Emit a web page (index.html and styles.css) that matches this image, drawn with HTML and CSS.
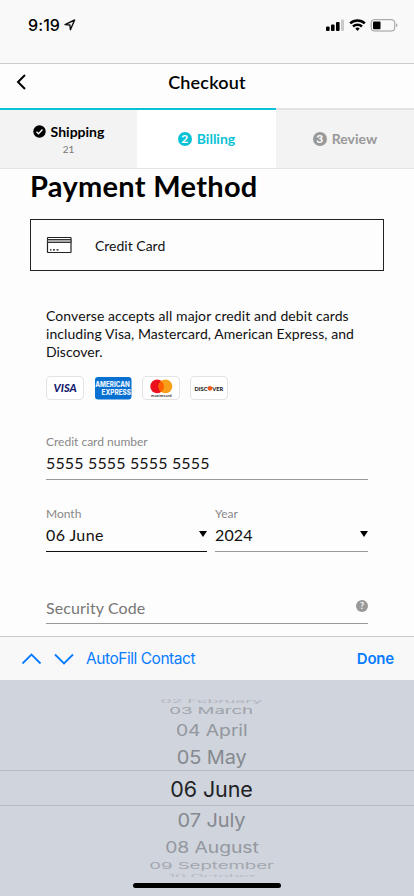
FILE: index.html
```html
<!DOCTYPE html>
<html lang="en">
<head>
<meta charset="utf-8">
<meta name="viewport" content="width=device-width, initial-scale=1">
<title>Checkout</title>
<link rel="stylesheet" href="styles.css">
</head>
<body>
<div class="phone">
  <header class="status">
    <span class="time">9:19</span>
    <svg class="location" width="12" height="12" viewBox="0 0 12 12"><path d="M1 5.6 10.6 1 6.4 10.8 5.9 6z" fill="none" stroke="#111" stroke-width="1.4" stroke-linejoin="round"/></svg>
    <svg class="indicators" width="74" height="16" viewBox="0 0 74 16">
      <rect x="1" y="9.500" width="3.600" height="4.500" rx="1"/><rect x="6" y="7.500" width="3.600" height="6.500" rx="1"/><rect x="11" y="5" width="3.600" height="9" rx="1"/><rect x="16" y="2.500" width="3" height="11.500" rx="1" fill="#c9c9c9"/>
      <path d="M25.200 6.400a10.500 10.500 0 0 1 14.600 0M28 9.500a6.600 6.600 0 0 1 9 0" fill="none" stroke="#000" stroke-width="2.500"/>
      <path d="M30.300 11.500a3.300 3.300 0 0 1 4.400 0L32.500 13.900z"/>
      <rect x="46.200" y="2.700" width="23.600" height="11.300" rx="3" fill="none" stroke="#999"/>
      <rect x="48" y="4.500" width="7.500" height="7.700" rx="1"/><path d="M71.300 6.200q2 2 0 4z" fill="#888"/>
    </svg>
  </header>
  <nav class="nav">
    <svg class="back" width="12" height="18" viewBox="0 0 12 18"><path d="M10 2 3 9l7 7" fill="none" stroke="#000" stroke-width="2"/></svg>
    <h1>Checkout</h1>
  </nav>
  <div class="progress"><div class="progress-fill"></div></div>
  <div class="steps">
    <div class="step done">
      <div class="step-name"><svg width="13" height="13" viewBox="0 0 13 13"><circle cx="6.500" cy="6.500" r="6.200"/><path d="m3.500 6.700 2 2 4-4.200" fill="none" stroke="#fff" stroke-width="1.400"/></svg><span>Shipping</span></div>
      <small>21</small>
    </div>
    <div class="step current"><div class="step-name"><i>2</i><span>Billing</span></div></div>
    <div class="step next"><div class="step-name"><i>3</i><span>Review</span></div></div>
  </div>
  <main>
    <h2>Payment Method</h2>
    <div class="method">
      <svg width="26" height="18" viewBox="0 0 26 18"><rect x="1.500" y="1.500" width="23.500" height="15" rx=".5" fill="#fff" stroke="#222" stroke-width="1.200"/><path d="M1.500 3.500h23.500v3H1.500z" fill="#aaa" stroke="#333"/><path d="M4 13.800h1.500M7 13.800h2M10.500 13.800h2" stroke="#111" stroke-width="1.300"/></svg>
      <span>Credit Card</span>
    </div>
    <div class="form">
      <p><span class="l1">Converse accepts all major credit and debit cards</span><br><span class="l2">including Visa, Mastercard, American Express, and</span><br>Discover.</p>
      <div class="brands">
        <svg class="brand" viewBox="0 0 38 24"><rect class="plate" x=".5" y=".5" width="37" height="23" rx="3.500"/><text x="7.500" y="16" class="visa">VISA</text></svg>
        <svg class="brand" viewBox="0 0 38 24"><rect x="1" y="1" width="36.500" height="22.500" rx="3" fill="#0870d0"/><text x="1.300" y="10.800" textLength="34.500" lengthAdjust="spacingAndGlyphs" class="amex">AMERICAN</text><text x="7.500" y="19" textLength="29.500" lengthAdjust="spacingAndGlyphs" class="amex">EXPRESS</text></svg>
        <svg class="brand" viewBox="0 0 38 24"><rect class="plate" x=".5" y=".5" width="37" height="23" rx="3.500"/><circle cx="15.200" cy="10.400" r="6.900" fill="#eb101c"/><circle cx="23.400" cy="10.400" r="6.900" fill="#f79e1b"/><path d="M19.300 4.900a6.900 6.900 0 0 1 0 11 6.900 6.900 0 0 1 0-11" fill="#ff5f00"/><text x="9" y="21" textLength="20.500" lengthAdjust="spacingAndGlyphs" class="master">mastercard</text></svg>
        <svg class="brand" viewBox="0 0 38 24"><rect class="plate" x=".5" y=".5" width="37" height="23" rx="3.500"/><text x="4.500" y="14.500" textLength="13" lengthAdjust="spacingAndGlyphs" class="discover">DISC</text><circle cx="19.900" cy="12.300" r="2.400" fill="#ed5a1c"/><text x="22.200" y="14.500" textLength="11" lengthAdjust="spacingAndGlyphs" class="discover">VER</text></svg>
      </div>
      <div class="field"><label>Credit card number</label><div class="value number">5555 5555 5555 5555</div></div>
      <div class="pair">
        <div class="field active"><label class="month">Month</label><div class="value june"><span>06 June</span><b class="arrow"></b></div></div>
        <div class="field"><label>Year</label><div class="value year"><span>2024</span><b class="arrow"></b></div></div>
      </div>
      <div class="security"><span>Security Code</span><i>?</i></div>
    </div>
  </main>
  <div class="toolbar">
    <svg width="54" height="14" viewBox="0 0 54 14"><path d="m1.500 11.500 9-9 9 9M34 2.500l9 9 9-9" fill="none" stroke="#087cff" stroke-width="1.800"/></svg>
    <span class="autofill">AutoFill Contact</span><span class="finish">Done</span>
  </div>
  <div class="picker">
    <div class="row r02"><span>02 February</span></div>
    <div class="row r03"><span>03 March</span></div>
    <div class="row r04"><span>04 April</span></div>
    <div class="row r05"><span>05 May</span></div>
    <div class="row r06"><span>06 June</span></div>
    <div class="row r07"><span>07 July</span></div>
    <div class="row r08"><span>08 August</span></div>
    <div class="row r09"><span>09 September</span></div>
    <div class="row r10"><span>10 October</span></div>
    <div class="home"></div>
  </div>
</div>
</body>
</html>
```
FILE: styles.css
```css
* { box-sizing: border-box; }
body { margin: 0; background: #fff; color: #111; font-family: Lato, "Liberation Sans", sans-serif; }
.phone { width: 414px; height: 896px; overflow: hidden; display: flex; flex-direction: column; background: #fdfdfd; }
.status { height: 64px; flex: none; display: flex; align-items: flex-start; padding: 15px 15px 0 28px; background: #f9f9f9; border-bottom: 1px solid #ccc; }
.time { font: 500 16px/20px Inter, sans-serif; color: #000; letter-spacing: .1px; }
.location { margin: 4px 0 0 4px; }
.indicators { margin: 2px 0 0 auto; }
.nav { height: 44px; flex: none; display: grid; grid-template-columns: 60px 1fr 60px; align-items: center; padding-bottom: 9px; }
.back { margin: 1px 0 0 15px; }
h1 { margin: 0; text-align: center; font-size: 18px; font-weight: 600; line-height: 24px; color: #000; letter-spacing: .2px; }
.progress { height: 2px; flex: none; background: #e2e2e2; }
.progress-fill { width: 276px; height: 2px; background: #09c2d6; }
.steps { height: 59px; flex: none; display: grid; grid-template-columns: 137px 139px 138px; border-bottom: 1px solid #e3e3e3; }
.step { display: flex; flex-direction: column; justify-content: center; align-items: center; background: #f3f3f3; }
.step-name { display: flex; align-items: center; gap: 5px; font-size: 14px; font-weight: 700; line-height: 18px; }
.step-name i { width: 14px; height: 14px; border-radius: 50%; color: #fff; font-style: normal; font-size: 12px; line-height: 14px; text-align: center; background: #09c2d6; }
.step small { font-size: 10px; line-height: 12px; margin-top: 2px; color: #777; }
.done { padding-bottom: 1px; }
.done .step-name { color: #000; }
.current { background: #fff; color: #09c2d6; }
.next { color: #999; }
.step.next i { background: #999; }
main { height: 467px; flex: none; padding: 0 30px; }
h2 { margin: 0; height: 50px; font-size: 29px; font-weight: 700; line-height: 34px; color: #000; white-space: nowrap; letter-spacing: .3px; }
.method { width: 354px; height: 52px; border: 1px solid #222; display: flex; align-items: center; gap: 23px; padding-left: 15px; font-size: 14px; }
.form { padding: 36px 16px 0; }
p { margin: 0; font-size: 14px; line-height: 18px; white-space: nowrap; }
.l1 { letter-spacing: .08px; }
.l2 { letter-spacing: .06px; }
.brands { display: flex; gap: 10px; margin-top: 15px; }
.brand { width: 38px; height: 24px; display: block; }
.plate { fill: #fff; stroke: #e3e3e3; }
.visa { font: italic 900 11px Lato, sans-serif; fill: #171e70; }
.amex { font: 800 7px Inter, sans-serif; fill: #e8f3ff; }
.master { font: 700 4.500px Lato, sans-serif; fill: #333; }
.discover { font: 900 6px Lato, sans-serif; fill: #222; }
.field { height: 46px; border-bottom: 1px solid #999; margin-top: 34px; }
.field label { display: block; font-size: 12px; line-height: 16px; color: #888; }
.value { font-size: 16px; line-height: 20px; margin-top: 3px; display: flex; justify-content: space-between; color: #111; letter-spacing: .15px; }
.june { letter-spacing: .4px; }
.pair { display: grid; grid-template-columns: 161px 153px; gap: 8px; margin-top: 26px; }
.pair .field { margin-top: 0; }
.pair .active { border-color: #111; }
.arrow { width: 0; height: 0; border: 4.500px solid transparent; border-top: 6px solid #000; border-bottom: 0; margin-top: 6px; }
.security { margin-top: 46px; height: 26px; border-bottom: 1px solid #999; display: flex; justify-content: space-between; font-size: 16px; line-height: 20px; color: #777; letter-spacing: .1px; }
.security i { width: 12px; height: 12px; margin-top: 2px; border-radius: 50%; background: #999; color: #fff; font-style: normal; font-weight: 700; font-size: 9px; line-height: 12px; text-align: center; }
.toolbar { height: 44px; flex: none; display: flex; align-items: center; padding: 0 20px 0 21px; border-top: 1px solid #c8c8c8; background: #f8f8f8; color: #087cff; font: 16px/20px Inter, sans-serif; }
.autofill { margin-left: 11px; font-size: 15.500px; letter-spacing: -.46px; }
.finish { margin-left: auto; font-weight: 600; font-size: 15px; letter-spacing: -.2px; }
.picker { height: 216px; flex: none; padding-top: 16px; background: #d0d4dc; font: 21.500px/24px Inter, sans-serif; color: #858990; }
.row { display: flex; justify-content: center; align-items: center; padding-left: 9px; white-space: nowrap; overflow: hidden; letter-spacing: -.1px; }
.r02 { height: 8px; opacity: .4; } .r02 span { transform: translateY(1px) scale(.83, .2); }
.r03 { height: 13px; opacity: .65; } .r03 span { transform: scale(.87, .43); }
.r04 { height: 26px; opacity: .8; } .r04 span { transform: scale(.9, .72); }
.r05 { height: 27px; } .r05 span { transform: scale(.93, .9); }
.r06 { height: 36px; border: 1px solid #b9bec6; border-width: 1px 0; color: #202226; } .r06 span { transform: translateY(.5px); }
.r07 { height: 28px; } .r07 span { transform: scale(.93, .9); }
.r08 { height: 25px; opacity: .8; } .r08 span { transform: scale(.9, .72); }
.r09 { height: 13px; opacity: .6; } .r09 span { transform: scale(.87, .43); }
.r10 { height: 5px; opacity: .35; } .r10 span { transform: translateY(1px) scale(.8, .2); }
.home { width: 148px; height: 5px; margin: 6px auto 0; border-radius: 3px; background: #000; }
```
